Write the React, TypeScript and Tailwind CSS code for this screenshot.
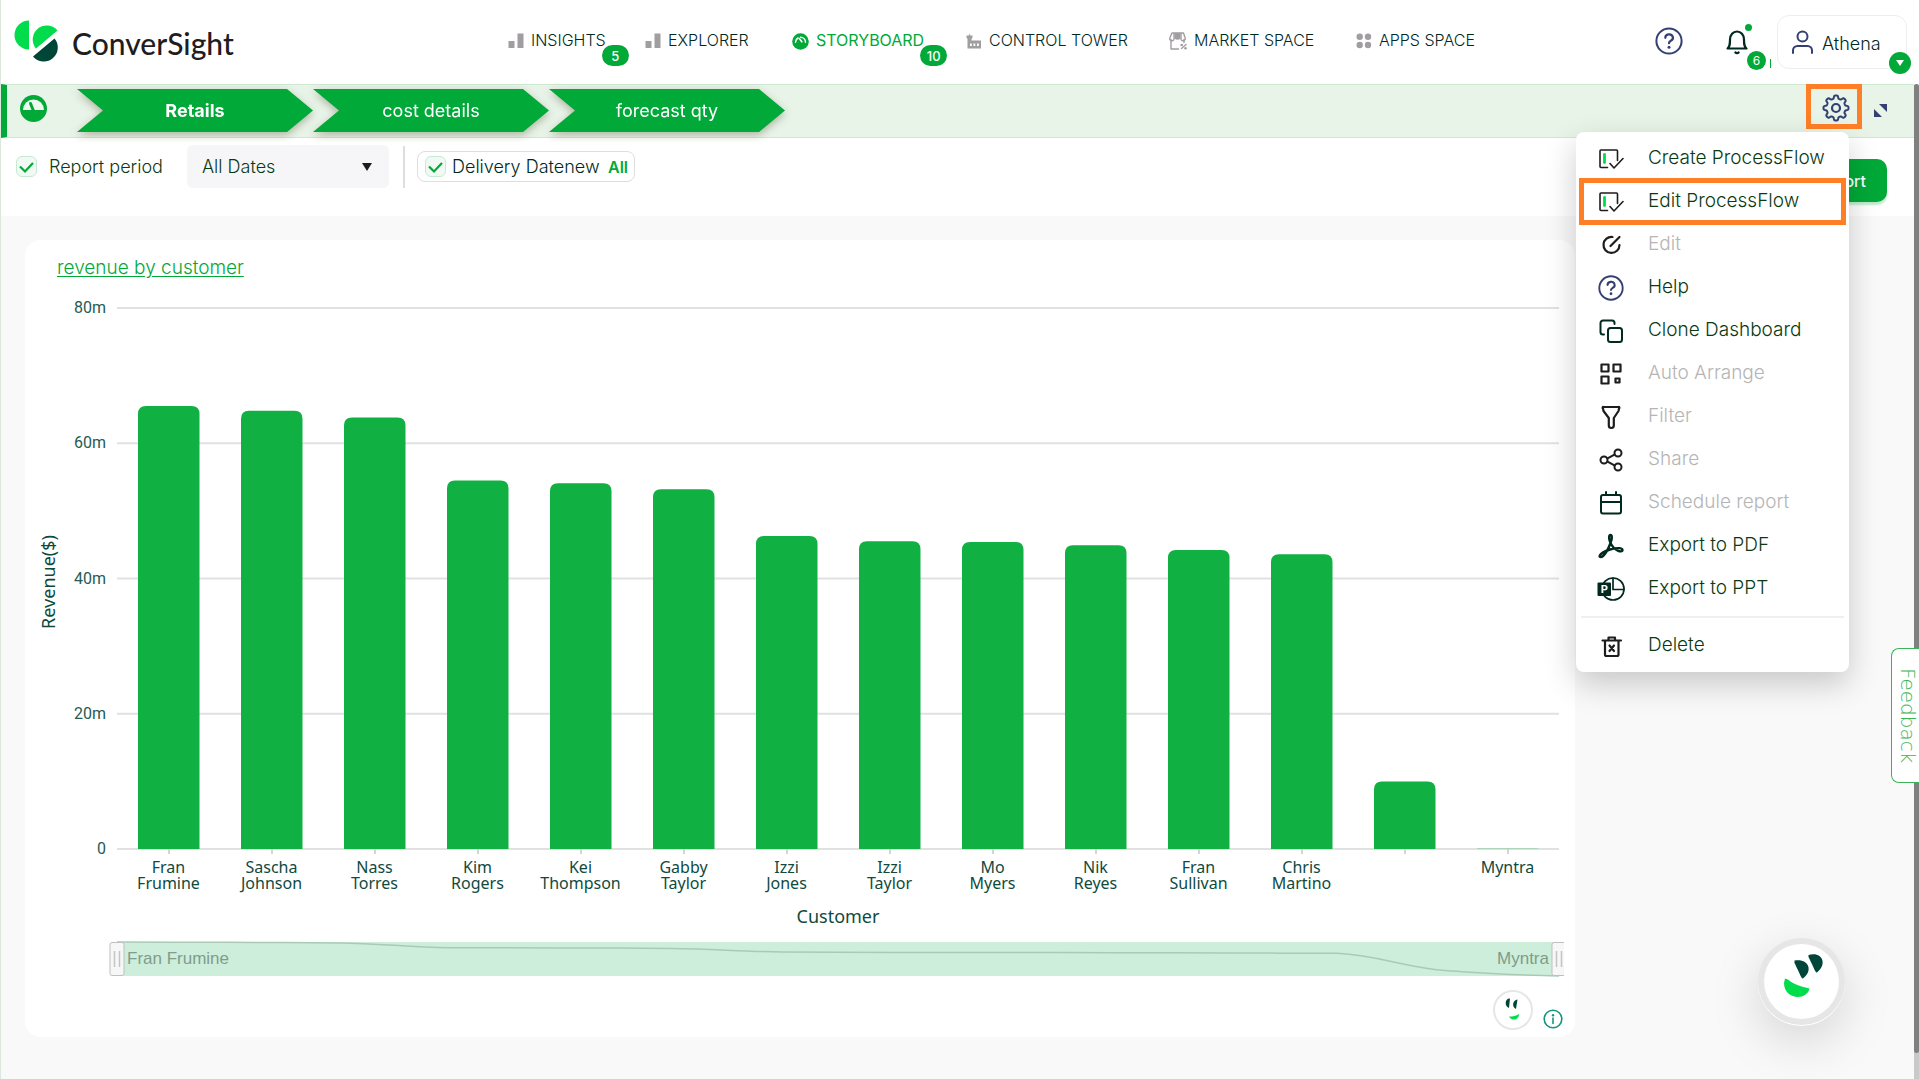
import React from "react";

const INK = "#00291f";
const NAVY = "#343f73";

function Svg({ size, w, h, children, box, className }: { size?: number; w?: number; h?: number; box: string; children: React.ReactNode; className?: string }) {
  return (
    <svg width={w ?? size} height={h ?? size} viewBox={box} fill="none" strokeLinecap="round" strokeLinejoin="round" className={className ?? "shrink-0"} aria-hidden="true">
      {children}
    </svg>
  );
}

const Logo = () => (
  <Svg w={45} h={43} box="0 0 45 43">
    <path d="M15 0.5A14.5 14.5 0 0 0 15 29.5Z" fill="#00dc4b" />
    <path d="M22 28.5A14 14 0 1 1 43.5 10.5Z" fill="#00dc4b" />
    <path d="M19 36.5A14 14 0 1 0 40.5 18.5Z" fill="#004638" />
  </Svg>
);

const BarsIcon = () => (
  <Svg size={16} box="0 0 16 16">
    <path d="M0.500 8h6v7h-6zM9.500 0.500h6V15h-6z" fill="#a09ea0" />
  </Svg>
);
const StoryIcon = () => (
  <Svg size={17} box="0 0 17 17">
    <circle cx="8.500" cy="8.500" r="8.300" fill="#00a938" />
    <path d="M3.500 9.200A5 5 0 0 1 6 5M8.500 4.300A5 5 0 0 1 13.500 9.200M9.800 8.800L7.500 5.800" stroke="#fff" strokeWidth="1.600" />
  </Svg>
);
const TowerIcon = () => (
  <Svg size={16} box="0 0 16 16">
    <path d="M0.500 2.500h2.300L3.500 0.500l0.700 2h2.300v2L5.500 6v1.500h9.500V15.500H1.500V6L0.500 4.500z" fill="#a09ea0" />
    <path d="M4 10.500h1.800v2.500H4zM7.500 10.500h1.800v2.500H7.500zM11 10.500h1.800v2.500H11z" fill="#fff" />
  </Svg>
);
const MarketIcon = () => (
  <Svg size={18} box="0 0 18 18">
    <path d="M2 7.500V17H9.500M15 7.500V10.500" stroke="#a09ea0" strokeWidth="1.400" />
    <path d="M3 1H14.500L16 5.500A2.200 2.200 0 0 1 12 7.500V1M3 1L1 5.500A2.200 2.200 0 0 0 5 7.500V1" stroke="#a09ea0" strokeWidth="1.400" />
    <path d="M5.500 1h6V6.500Q8.500 9 5.500 6.500z" fill="#a09ea0" />
    <path d="M12.500 16.500L17 12.500" stroke="#a09ea0" strokeWidth="1.400" />
    <circle cx="12.700" cy="13" r="1.300" fill="#a09ea0" />
    <circle cx="16.500" cy="16.300" r="1.300" fill="#a09ea0" />
  </Svg>
);
const AppsIcon = () => (
  <Svg size={16} box="0 0 16 16">
    <circle cx="3.700" cy="3.700" r="3.200" fill="#a09ea0" />
    <circle cx="12" cy="3.700" r="3.200" fill="#a09ea0" />
    <circle cx="3.700" cy="12" r="3.200" fill="#a09ea0" />
    <circle cx="12" cy="12" r="3.200" fill="#a09ea0" />
  </Svg>
);

const HelpIcon = ({ size }: { size: number }) => (
  <Svg size={size} box="0 0 28 28">
    <circle cx="14" cy="14" r="12.600" stroke={NAVY} strokeWidth="2" />
    <path d="M10.300 10.800a3.800 3.400 0 1 1 5.500 3c-1.300.7-1.800 1.200-1.800 2.400" stroke={NAVY} strokeWidth="2.200" />
    <circle cx="14" cy="20.200" r="1.500" fill={NAVY} />
  </Svg>
);

const gearPath =
  Array.from({ length: 161 }, (_, i) => {
    const t = (i / 160) * Math.PI * 2;
    const r = 11 + 1.55 * Math.tanh(2.2 * Math.cos(8 * t));
    return `${i ? "L" : "M"}${(14 + r * Math.cos(t)).toFixed(2)} ${(14 + r * Math.sin(t)).toFixed(2)}`;
  }).join("") + "Z";

const GearIcon = () => (
  <Svg size={28} box="0 0 28 28">
    <path d={gearPath} stroke={NAVY} strokeWidth="2" />
    <circle cx="14" cy="14" r="4" stroke={NAVY} strokeWidth="2.200" />
  </Svg>
);

const FlowIcon = () => (
  <Svg size={26} box="0 0 26 26">
    <path d="M9.500 21.500H3A1 1 0 0 1 2 20.500V5A1 1 0 0 1 3 4H18.500A1 1 0 0 1 19.500 5V14.500" stroke="#1d1d1f" strokeWidth="1.600" />
    <path d="M12 17.500L16 22L25 12.500" stroke="#1d1d1f" strokeWidth="1.600" />
    <path d="M6.500 8.500V16.500" stroke="#00dc4b" strokeWidth="2.800" />
  </Svg>
);
const EditIcon = () => (
  <Svg size={26} box="0 0 26 26">
    <path d="M14.500 5A8 8 0 1 0 21.500 13M12.500 14L21.500 5" stroke="#1d1d1f" strokeWidth="2.200" />
  </Svg>
);
const CloneIcon = () => (
  <Svg size={26} box="0 0 26 26">
    <rect x="10" y="10" width="14" height="14" rx="2.500" stroke={INK} strokeWidth="2" />
    <path d="M6 16.500H5A2.500 2.500 0 0 1 2.500 14V5A2.500 2.500 0 0 1 5 2.500H14A2.500 2.500 0 0 1 16.500 5V6" stroke={INK} strokeWidth="2" />
  </Svg>
);
const ArrangeIcon = () => (
  <Svg size={26} box="0 0 26 26">
    <path d="M3.500 3.500h7v7h-7zM15.500 3.500h7v7h-7zM3.500 15.500h7v7h-7zM17.500 17.500h4v4h-4z" stroke="#1d1d1f" strokeWidth="2.200" />
  </Svg>
);
const FilterIcon = () => (
  <Svg size={26} box="0 0 26 26">
    <path d="M5.500 3H20.500A0.800 0.800 0 0 1 21 4.500L20.500 7L15.800 14V21.500A2.500 2.500 0 0 1 10.800 21.500V14L5.500 7L5 4.500A0.800 0.800 0 0 1 5.500 3Z" stroke="#1d1d1f" strokeWidth="2.200" />
  </Svg>
);
const ShareIcon = () => (
  <Svg size={26} box="0 0 26 26">
    <path d="M9.500 11.300L16.500 7.700M9.500 14.700L16.500 18.300" stroke="#1d1d1f" strokeWidth="2" />
    <circle cx="6" cy="13" r="3.500" stroke="#1d1d1f" strokeWidth="2" />
    <circle cx="20" cy="6" r="3.500" stroke="#1d1d1f" strokeWidth="2" />
    <circle cx="20" cy="20" r="3.500" stroke="#1d1d1f" strokeWidth="2" />
  </Svg>
);
const ScheduleIcon = () => (
  <Svg size={26} box="0 0 26 26">
    <rect x="3" y="5" width="20" height="18.500" rx="2" stroke={INK} strokeWidth="2" />
    <path d="M3 12H23M8 5V2M18 5V2" stroke={INK} strokeWidth="2" />
  </Svg>
);
const PdfIcon = () => (
  <Svg size={26} box="0 0 26 26">
    <path
      d="M12.500 10C10.500 6 10.800 2 12.500 2S14.300 6 12.500 10C10.500 16 6 24 2.800 24S3 19 12 16.500S24.500 15.200 24.500 17.300S17 19 12.500 10Z"
      stroke={INK}
      strokeWidth="2.400"
    />
  </Svg>
);
const PptIcon = () => (
  <Svg w={28} h={26} box="0 0 28 26">
    <circle cx="16" cy="13" r="11" stroke={INK} strokeWidth="1.700" />
    <path d="M16 2V13.500H27" stroke={INK} strokeWidth="1.700" />
    <rect x="0.500" y="6.500" width="13.500" height="13.500" rx="1" fill={INK} />
    <text x="7.200" y="17.300" textAnchor="middle" fontSize="11" fontWeight="700" fontFamily="Inter, sans-serif" fill="#fff">P</text>
  </Svg>
);
const TrashIcon = () => (
  <Svg size={26} box="0 0 26 26">
    <path d="M4.500 7.500H23M10.500 7V4.500H17V7M7 8V21.500A1.500 1.500 0 0 0 8.500 23H19A1.500 1.500 0 0 0 20.500 21.500V8" stroke="#1d1d1f" strokeWidth="2.200" />
    <path d="M11.500 12.500L16 18M16 12.500L11.500 18" stroke="#1d1d1f" strokeWidth="2.200" />
  </Svg>
);

const Check = () => (
  <Svg size={21} box="0 0 21 21" className="pointer-events-none absolute inset-0">
    <path d="M4 10.500L9 15.500L17 7" stroke="#00a938" strokeWidth="2.200" strokeLinecap="butt" strokeLinejoin="miter" />
  </Svg>
);

function TickBox({ id }: { id: string }) {
  return (
    <span className="relative size-[21px] shrink-0">
      <input id={id} type="checkbox" defaultChecked className="block size-[21px] appearance-none rounded-md border border-[#c9e9d2] bg-[#f0f9f4]" />
      <Check />
    </span>
  );
}

const nav = [
  { label: "INSIGHTS", icon: <BarsIcon />, width: "w-[137px]", badge: "5" },
  { label: "EXPLORER", icon: <BarsIcon />, width: "w-[147px]" },
  { label: "STORYBOARD", icon: <StoryIcon />, width: "w-[174px]", badge: "10", active: true },
  { label: "CONTROL TOWER", icon: <TowerIcon />, width: "w-[203px]" },
  { label: "MARKET SPACE", icon: <MarketIcon />, width: "w-[187px]" },
  { label: "APPS SPACE", icon: <AppsIcon />, width: "w-[130px]" },
];

function Header() {
  return (
    <header className="flex h-[84px] items-start bg-white">
      <a href="#" className="flex w-[507px] shrink-0 items-start gap-[13px] pt-[20px] pl-[13px]">
        <Logo />
        <span className="font-['Lato'] text-[30px] leading-[46px] font-medium text-[#1f1d1e]">ConverSight</span>
      </a>
      <nav className="flex shrink-0 pt-[28px]">
        {nav.map((n) => (
          <div key={n.label} className={`${n.width} flex`}>
            <a href="#" className={`relative flex items-center gap-[7px] text-[16px] leading-6 whitespace-nowrap ${n.active ? "text-[#00a938]" : "font-light text-[#00291f]"}`}>
              <span className="pt-[2px]">{n.icon}</span>
              {n.label}
              {n.badge && (
                <span className="absolute top-[17px] -right-[23px] flex h-[21px] w-[27px] items-center justify-center rounded-full bg-[#00a938] text-[13px] font-medium text-white">{n.badge}</span>
              )}
            </a>
          </div>
        ))}
      </nav>
      <div className="ml-auto flex items-start pr-[12px]">
        <button aria-label="Help" className="mt-[27px] mr-[43px]">
          <HelpIcon size={28} />
        </button>
        <button aria-label="Notifications" className="relative mt-[30px] mr-[29px]">
          <Svg w={22} h={25} box="0 0 22 25">
            <path d="M1.500 18.500C4 16.500 4 14 4 9.500A7 8 0 0 1 18 9.500C18 14 18 16.500 20.500 18.500Z" stroke={INK} strokeWidth="2.200" />
            <path d="M9.500 22.500A1.800 1.500 0 0 0 12.500 22.500" stroke={INK} strokeWidth="2.400" />
          </Svg>
          <span className="absolute -top-[6px] left-[19px] size-[7px] rounded-full bg-[#00a938]" />
          <span className="absolute top-[21px] left-[21px] flex size-[19px] items-center justify-center rounded-full bg-[#00a938] text-[12px] text-white">6</span>
          <span className="absolute top-[29px] left-[44px] h-[9px] w-px bg-[#00a938]" />
        </button>
        <button className="relative mt-[15px] flex h-[54px] w-[130px] items-center gap-[8px] rounded-xl border border-[#eeeeee] bg-white pl-[13px] text-[18px] font-light text-[#00291f]">
          <Svg w={23} h={24} box="0 0 23 24">
            <circle cx="11.500" cy="6.500" r="5" stroke={NAVY} strokeWidth="2" />
            <path d="M2 23V20.500A4.500 4.500 0 0 1 6.500 16H16.500A4.500 4.500 0 0 1 21 20.500V23" stroke={NAVY} strokeWidth="2" />
          </Svg>
          <span className="pt-[2px]">Athena</span>
          <span className="absolute top-[36px] -right-[5px] flex size-[22px] items-center justify-center rounded-full bg-[#00a938]">
            <Svg size={8} box="0 0 8 8">
              <path d="M0 1H8L4 7Z" fill="#fff" />
            </Svg>
          </span>
        </button>
      </div>
    </header>
  );
}

const menu = [
  { label: "Create ProcessFlow", icon: <FlowIcon /> },
  { label: "Edit ProcessFlow", icon: <FlowIcon />, marked: true },
  { label: "Edit", icon: <EditIcon />, off: true },
  { label: "Help", icon: <HelpIcon size={26} /> },
  { label: "Clone Dashboard", icon: <CloneIcon /> },
  { label: "Auto Arrange", icon: <ArrangeIcon />, off: true },
  { label: "Filter", icon: <FilterIcon />, off: true },
  { label: "Share", icon: <ShareIcon />, off: true },
  { label: "Schedule report", icon: <ScheduleIcon />, off: true },
  { label: "Export to PDF", icon: <PdfIcon /> },
  { label: "Export to PPT", icon: <PptIcon /> },
];

function MenuItem({ label, icon, off, marked }: { label: string; icon: React.ReactNode; off?: boolean; marked?: boolean }) {
  return (
    <button disabled={off} className={`relative flex h-[43px] w-full items-center gap-[23px] pl-[21px] text-left text-[19px] font-light whitespace-nowrap ${off ? "text-[#b5b5b5]" : "text-[#0a3a12]"}`}>
      <span className="flex w-[28px] justify-center">{icon}</span>
      {label}
      {marked && <span className="absolute inset-x-[3px] -inset-y-[2px] border-[5px] border-[#ff7f27]" />}
    </button>
  );
}

function SettingsMenu() {
  return (
    <div className="absolute top-[47px] right-[13px] z-20 w-[273px] rounded-lg bg-white py-[5px] shadow-[0_12px_32px_rgba(0,0,0,0.2)]">
      {menu.map((m) => (
        <MenuItem key={m.label} {...m} />
      ))}
      <hr className="mx-[5px] my-[6px] border-t-2 border-[#efefef]" />
      <MenuItem label="Delete" icon={<TrashIcon />} />
    </div>
  );
}

const steps = ["Retails", "cost details", "forecast qty"];

function StoryBar() {
  return (
    <div className="flex h-[54px] items-start border-y border-l-[6px] border-y-[#cfe8d2] border-l-[#00a938] bg-[#e9f4e9]">
      <Svg size={27} box="0 0 27 27" className="mt-[10px] ml-[13px] shrink-0">
        <circle cx="13.500" cy="13.500" r="13.500" fill="#00a938" />
        <path d="M3 15A10.500 10.500 0 0 1 24 15Z" fill="#eff8ef" />
        <path d="M13.500 16L10.500 8.500" stroke="#00a938" strokeWidth="3" />
      </Svg>
      <div className="ml-[30px] flex pt-[4px]">
        {steps.map((s, i) => (
          <div key={s} className="drop-shadow-[0_3px_4px_rgba(60,60,20,0.35)]">
            <button className={`h-[43px] w-[236px] bg-[#00a938] text-[18px] text-white [clip-path:polygon(0_0,210px_0,100%_50%,210px_100%,0_100%,26px_50%)] ${i === 0 ? "font-bold" : "font-normal"}`}>{s}</button>
          </div>
        ))}
      </div>
      <div className="relative ml-auto flex pr-[27px]">
        <button aria-label="Settings" className="-mt-px flex h-[45px] w-[56px] items-center justify-center border-[5px] border-[#ff7f27] pt-[3px] pl-[3px]">
          <GearIcon />
        </button>
        <button aria-label="Full screen" className="mt-[19px] ml-[12px] self-start">
          <Svg size={13} box="0 0 13 13">
            <path d="M5 0H13V8ZM0 5V13H8Z" fill={NAVY} />
          </Svg>
        </button>
        <div className="absolute top-0 right-[52px] h-0">
          <SettingsMenu />
        </div>
      </div>
    </div>
  );
}

function Filters() {
  return (
    <div className="flex h-[78px] items-start bg-white pr-[27px] pl-[15px]">
      <div className="mt-[7px] flex h-[43px] w-[171px] items-center gap-[12px] text-[18px] font-light text-[#0a3a12]">
        <TickBox id="period-on" />
        <label htmlFor="period-on">Report period</label>
      </div>
      <div className="relative mt-[7px]">
        <select aria-label="Report period range" className="h-[43px] w-[202px] appearance-none rounded-md bg-[#f6f6f9] px-[15px] text-[18px] font-light text-[#0a3a12]">
          <option>All Dates</option>
        </select>
        <Svg w={10} h={8} box="0 0 10 8" className="pointer-events-none absolute top-[18px] right-[17px]">
          <path d="M0 0H10L5 8Z" fill="#1d1d1f" />
        </Svg>
      </div>
      <div className="mt-[8px] ml-[14px] h-[42px] w-[2px] bg-[#dedede]" />
      <div className="mt-[13px] ml-[12px] flex h-[31px] w-[218px] items-center gap-[6px] rounded-lg border border-[#dedede] pl-[7px] text-[18px] font-light text-[#00291f]">
        <TickBox id="delivery-on" />
        <label htmlFor="delivery-on">Delivery Datenew</label>
        <span className="ml-auto pr-[6px] text-[16px] font-semibold text-[#00a938]">All</span>
      </div>
      <button className="mt-[21px] ml-auto h-[43px] rounded-[10px] bg-[#00a938] px-[21px] text-[16px] font-medium text-white shadow-[0_3px_2px_rgba(0,169,56,0.25)]">Export</button>
    </div>
  );
}

const data: { name: string[]; value: number }[] = [
  { name: ["Fran", "Frumine"], value: 65.5 },
  { name: ["Sascha", "Johnson"], value: 64.8 },
  { name: ["Nass", "Torres"], value: 63.8 },
  { name: ["Kim", "Rogers"], value: 54.5 },
  { name: ["Kei", "Thompson"], value: 54.1 },
  { name: ["Gabby", "Taylor"], value: 53.2 },
  { name: ["Izzi", "Jones"], value: 46.3 },
  { name: ["Izzi", "Taylor"], value: 45.5 },
  { name: ["Mo", "Myers"], value: 45.4 },
  { name: ["Nik", "Reyes"], value: 44.9 },
  { name: ["Fran", "Sullivan"], value: 44.2 },
  { name: ["Chris", "Martino"], value: 43.6 },
  { name: [""], value: 10 },
  { name: ["Myntra"], value: 0.04 },
];

const LEFT = 92;
const BAND = 103;
const BASE = 559;
const RIGHT = LEFT + BAND * data.length;
const yOf = (v: number) => BASE - (v / 80) * 541;

function zoomLine() {
  const step = (RIGHT - LEFT) / (data.length - 1);
  const pts = data.map((d, i) => [LEFT + i * step, 686 - (d.value / 65.5) * 34]);
  let d = `M${pts[0][0]} ${pts[0][1]}`;
  for (let i = 1; i < pts.length; i++) {
    const p0 = pts[Math.max(i - 2, 0)];
    const p1 = pts[i - 1];
    const p2 = pts[i];
    const p3 = pts[Math.min(i + 1, pts.length - 1)];
    d += `C${p1[0] + step * 0.4} ${Math.min(Math.max(p1[1] + (p2[1] - p0[1]) / 8, p1[1]), p2[1])} ${p2[0] - step * 0.4} ${Math.max(p1[1], p2[1] - (p3[1] - p1[1]) / 8)} ${p2[0]} ${p2[1]}`;
  }
  return d;
}

function Handle({ x }: { x: number }) {
  return (
    <g>
      <rect x={x} y="652.500" width="14" height="33" rx="2" fill="#f7f7f7" stroke="#bfbfbf" />
      <path d={`M${x + 4.5} 661v16M${x + 9.5} 661v16`} stroke="#c4c4c4" strokeWidth="1.500" />
    </g>
  );
}

function Chart() {
  return (
    <svg viewBox="0 0 1550 690" className="mt-2 block w-full" role="img" aria-label="Revenue by customer">
      {[0, 20, 40, 60, 80].map((v) => (
        <g key={v}>
          <path d={`M${LEFT} ${yOf(v)}H${RIGHT}`} stroke="#e0e2e2" strokeWidth="2" />
          <text x="81" y={yOf(v) + 5} textAnchor="end" fontSize="16" fill="#255c50" fontFamily="Roboto, sans-serif">
            {v ? `${v}m` : "0"}
          </text>
        </g>
      ))}
      {data.map((d, i) => {
        const cx = LEFT + BAND * i + BAND / 2;
        const top = yOf(d.value);
        const r = Math.min(8, BASE - top);
        const x0 = cx - 30.5;
        const x1 = cx + 31;
        return (
          <g key={i}>
            <path d={`M${cx + 0.5} ${BASE}v5`} stroke="#c6c9c9" strokeWidth="1.500" />
            <path d={`M${x0} ${BASE}V${top + r}Q${x0} ${top} ${x0 + r} ${top}H${x1 - r}Q${x1} ${top} ${x1} ${top + r}V${BASE}Z`} fill="#10b043" />
            {d.name.map((n, k) => (
              <text key={k} x={cx} y={583 + 16 * k} textAnchor="middle" fontSize="16" fill="#0f4a3e" fontFamily="'Noto Sans', sans-serif">
                {n}
              </text>
            ))}
          </g>
        );
      })}
      <text x="813" y="633" textAnchor="middle" fontSize="18" fill="#0f4a3e" fontFamily="'Noto Sans', sans-serif">Customer</text>
      <text transform="translate(30 292) rotate(-90)" textAnchor="middle" fontSize="18" fill="#0f4a3e" fontFamily="'Noto Sans', sans-serif">Revenue($)</text>
      <rect x={LEFT} y="652" width={RIGHT - LEFT + 5} height="34" fill="#cdeeda" />
      <path d={zoomLine()} stroke="#a9cbb6" strokeWidth="1.500" fill="none" />
      <text x="102" y="674" fontSize="17" fill="#809c8c" fontFamily="'Liberation Sans', sans-serif">Fran Frumine</text>
      <text x="1524" y="674" textAnchor="end" fontSize="17" fill="#809c8c" fontFamily="'Liberation Sans', sans-serif">Myntra</text>
      <Handle x={LEFT - 7} />
      <svg x="1526" y="640" width="13" height="50" viewBox="1526 640 13 50">
        <Handle x={1527} />
      </svg>
    </svg>
  );
}

function ChartCard() {
  return (
    <section className="flex-1 rounded-2xl bg-white pt-[14px]">
      <a href="#" className="ml-[32px] block w-fit text-[19px] leading-7 font-light text-[#00a938] underline underline-offset-2">revenue by customer</a>
      <Chart />
      <div className="flex h-[57px] items-start justify-end gap-[10px] pt-[10px] pr-[12px]">
        <button aria-label="Ask Athena" className="flex size-[40px] items-center justify-center rounded-full border-2 border-[#e6e6e6]">
          <Svg w={20} h={26} box="0 0 20 26">
            <path d="M7 1.500C2 1 1 9 6 11ZM14.500 2.500C9.500 3 8.500 10 13 12Z" fill="#004638" />
            <path d="M6 19.500C10 19.500 13 19 16 17C16 24 8 24 6 19.500Z" fill="#00dc4b" />
          </Svg>
        </button>
        <button aria-label="Chart details" className="mt-[19px]">
          <Svg size={20} box="0 0 20 20">
            <circle cx="10" cy="10" r="8.800" stroke="#14967f" strokeWidth="1.600" />
            <path d="M10 9V14.500" stroke="#14967f" strokeWidth="1.600" />
            <circle cx="10" cy="6.200" r="1.200" fill="#14967f" />
          </Svg>
        </button>
      </div>
    </section>
  );
}

export default function App() {
  return (
    <div className="relative min-h-screen overflow-hidden border-l border-[#dbe8dc] bg-[#f9f9f9] font-['Inter',sans-serif]">
      <Header />
      <div className="flex">
        <main className="min-w-0 flex-1">
          <StoryBar />
          <Filters />
          <div className="flex pt-6 pr-[339px] pb-[42px] pl-6">
            <ChartCard />
          </div>
        </main>
        <div className="w-[5px] rounded-t-sm bg-[#c9c9c9] pb-[26px]">
          <div className="h-full rounded-sm bg-[#808080]" />
        </div>
      </div>
      <button className="absolute top-[648px] right-0 z-10 flex h-[135px] w-[28px] items-center justify-center rounded-l-lg border border-r-0 border-[#3bb455] bg-white pl-[5px] font-['DejaVu_Sans'] text-[20px] font-extralight text-[#3bb455] [writing-mode:vertical-rl]">
        Feedback
      </button>
      <button aria-label="Open assistant" className="absolute right-[74px] bottom-[54px] flex size-[87px] items-center justify-center rounded-full bg-[#e6e6e6] shadow-[0_1px_0_#ffffff,0_16px_50px_rgba(0,0,0,0.15)]">
        <span className="rounded-full bg-[radial-gradient(circle_at_40%_40%,#ffffff_70%,#f3f5f8)]">
          <Svg w={75} h={75} box="0 0 75 75">
            <path d="M30.500 16.500C44 14 50 26 39 34.500C37 34 37 32 30.500 19ZM44.500 11C58 7 64 20 53 28.500C51 28 51 26 44.500 13Z" fill="#004638" />
            <path d="M21 34.500C25 35 28 41 45.500 44.500C43 57 20 56 20 39Z" fill="#00dc4b" />
          </Svg>
        </span>
      </button>
    </div>
  );
}
